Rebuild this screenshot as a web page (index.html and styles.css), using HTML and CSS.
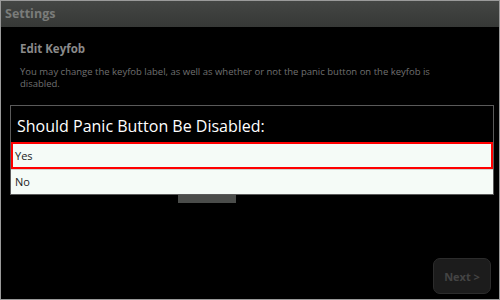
FILE: index.html
```html
<!DOCTYPE html>
<html>
<head>
    <title>Settings</title>
    <link rel="stylesheet" href="styles.css">
</head>
<body>
    <div class="screen">
        <header class="title-bar">Settings</header>

        <main class="content">
            <h2>Edit Keyfob</h2>
            <p>You may change the keyfob label, as well as whether or not the panic button on the keyfob is disabled.</p>
            <div class="ghost-button"></div>
        </main>

        <div class="dialog">
            <div class="dialog-title">Should Panic Button Be Disabled:</div>
            <div class="option selected">Yes</div>
            <div class="option">No</div>
        </div>

        <footer class="actions">
            <button class="next-button">Next &gt;</button>
        </footer>
    </div>
</body>
</html>
```

FILE: styles.css
```css
body {
    margin: 0;
    background: #000;
    font-family: "Open Sans", "Noto Sans", sans-serif;
}

.screen {
    position: relative;
    width: 500px;
    height: 300px;
    box-sizing: border-box;
    border: 1px solid #9a9a9a;
    background: #000;
    display: flex;
    flex-direction: column;
}

.title-bar {
    height: 26px;
    background: linear-gradient(#444644, #363836);
    color: #7a7c7a;
    font-weight: bold;
    font-size: 12.5px;
    line-height: 26px;
    padding-left: 4px;
    flex-shrink: 0;
}

.content {
    padding: 14px 19px 0;
    flex: 1;
}

.content h2 {
    margin: 0;
    font-size: 11.5px;
    font-weight: bold;
    color: #8a8a8a;
    line-height: 16px;
}

.content p {
    margin: 9px 0 0;
    max-width: 412px;
    font-size: 9.5px;
    line-height: 12px;
    color: #707070;
}

.ghost-button {
    width: 58px;
    height: 8px;
    margin: 105px 0 0 158px;
    background: #4a4c4a;
}

/* Modal list dialog */
.dialog {
    position: absolute;
    left: 9px;
    top: 104px;
    width: 484px;
    border: 1px solid #5a5a5a;
    box-sizing: border-box;
    background: #000;
}

.dialog-title {
    color: #fff;
    font-size: 16px;
    padding: 9px 6px 5px;
    line-height: 22px;
}

.option {
    background: #f5fbf7;
    color: #222;
    font-size: 11px;
    height: 24px;
    line-height: 24px;
    padding-left: 4px;
    border-top: 1px solid #cfd3d0;
}

.option.selected {
    border: 2px solid #f00;
    height: 23px;
    line-height: 23px;
    padding-left: 2px;
}

.actions {
    display: flex;
    justify-content: flex-end;
    padding: 0 8px 5px 0;
}

.next-button {
    width: 58px;
    height: 36px;
    border-radius: 7px;
    border: 1px solid #2c2c2c;
    background: #1c1c1c;
    color: #444;
    font-family: inherit;
    font-weight: bold;
    font-size: 11px;
}
```
